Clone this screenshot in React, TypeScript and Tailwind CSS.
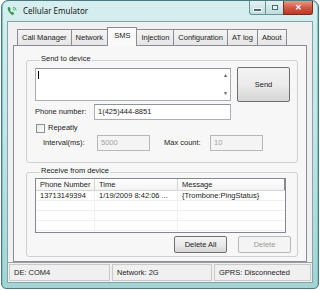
import React from 'react'

const tabs = ['Call Manager', 'Network', 'SMS', 'Injection', 'Configuration', 'AT log', 'About']

function PhoneIcon() {
  return (
    <svg width="11" height="10" viewBox="0 0 11 10">
      <path
        d="M1.2 1.6 C0.6 3.6 2.6 7.4 5.6 8.8 L7 7.6 L5.4 6.1 L4.6 6.8 C3.6 6 2.9 5 2.6 4 L3.4 3.3 L2.4 1.4 Z"
        fill="#2f9a3a"
        stroke="#1d6e27"
        strokeWidth="0.5"
      />
      <path d="M6.2 1.4 A3 3 0 0 1 9.2 4.2" fill="none" stroke="#3aa845" strokeWidth="0.9" />
      <path d="M6 3.1 A1.5 1.5 0 0 1 7.5 4.5" fill="none" stroke="#3aa845" strokeWidth="0.9" />
    </svg>
  )
}

function Button({ label, disabled }: { label: string; disabled?: boolean }) {
  return (
    <div
      className={
        disabled
          ? 'w-[53px] h-[17px] flex items-center justify-center rounded-[2px] border border-[#b5b9bc] bg-[#f4f4f4] text-[#9a9a9a]'
          : 'w-[53px] h-[17px] flex items-center justify-center rounded-[2px] border border-[#707070] bg-gradient-to-b from-[#f3f3f3] via-[#ebebeb] to-[#d6d6d6]'
      }
    >
      {label}
    </div>
  )
}

function Input({ value, w, disabled }: { value: string; w: string; disabled?: boolean }) {
  return (
    <div
      className={
        (disabled
          ? 'bg-[#f4f4f4] border-[#b8b8b8] text-[#a3a3a3] '
          : 'bg-white border-[#abadb3] border-t-[#8e9299] ') +
        w +
        ' h-[16px] border flex items-center pl-[3px]'
      }
    >
      {value}
    </div>
  )
}

export default function App() {
  return (
    <div className="w-[320px] h-[290px] bg-white font-['Liberation_Sans',Arial,sans-serif] text-[7.5px] leading-none text-[#1b1b1b]">
      <div className="ml-[1px] w-[318px] h-[289px] rounded-t-[7px] rounded-b-[5px] border border-[#4d7a7f] bg-gradient-to-b from-[#d6eeef] via-[#c2e3e4] to-[#a4d3d3] flex flex-col px-[5px] pb-[5px] shadow-[inset_1px_0_0_#7cc7c7,inset_-1px_0_0_#7cc7c7]">
        {/* title bar */}
        <div className="h-[20px] flex items-start justify-between">
          <div className="flex items-center h-[19px] gap-[5px]">
            <PhoneIcon />
            <span className="font-['Noto_Sans',sans-serif] text-[8px] text-[#151515]">Cellular Emulator</span>
          </div>
          <div className="flex h-[14px] mt-0">
            <div className="w-[17px] h-full rounded-bl-[3px] border border-t-0 border-[#6d9296] bg-gradient-to-b from-[#e4f2f3] to-[#bcdcdd] flex items-center justify-center">
              <div className="w-[7px] h-[2px] mt-[4px] bg-[#4c6a70] border border-[#f5f5f5] box-content" />
            </div>
            <div className="w-[17px] h-full border-b border-[#6d9296] bg-gradient-to-b from-[#e4f2f3] to-[#bcdcdd] flex items-center justify-center">
              <div className="w-[6px] h-[5px] border border-[#4c6a70] bg-white/60" />
            </div>
            <div className="w-[30px] h-full rounded-br-[3px] border border-t-0 border-[#7a2d22] bg-gradient-to-b from-[#e49a8b] via-[#cf5a45] to-[#b93a26] flex items-center justify-center">
              <span className="text-white text-[8px] font-bold leading-none">✕</span>
            </div>
          </div>
        </div>

        {/* client */}
        <div className="flex-1 border border-[#82a7ab] bg-[#f0f0f0] flex flex-col">
          <div className="px-[5px] pt-[7px]">
            {/* tab strip */}
            <div className="flex h-[16px] ml-[4px] items-end">
              {tabs.map((t) =>
                t === 'SMS' ? (
                  <div
                    key={t}
                    className="relative z-10 -mb-px -ml-px h-[19px] px-[6px] pb-[3px] flex items-center border border-b-0 border-[#898c95] bg-[#fafafa]"
                  >
                    {t}
                  </div>
                ) : (
                  <div
                    key={t}
                    className="-ml-px first:ml-0 h-[16px] px-[4px] flex items-center border border-b-0 border-[#898c95] bg-gradient-to-b from-[#f4f4f4] to-[#e6e6e6]"
                  >
                    {t}
                  </div>
                )
              )}
            </div>

            {/* tab panel */}
            <div className="h-[217px] border border-[#898c95] bg-[#f7f7f7] flex flex-col">
              {/* Send to device */}
              <fieldset className="ml-[12px] mr-[8px] mt-[9px] h-[108px] border border-[#d0d0d0] rounded-[3px] pl-[8px] pr-[4px]">
                <legend className="ml-[5px] px-[1px] h-[10px]">Send to device</legend>
                <div className="flex items-start mt-[2px] gap-[6px]">
                  <div className="w-[196px] h-[33px] mt-[1px] bg-white border border-[#abadb3] border-t-[#8e9299] flex">
                    <div className="flex-1 pl-[2px] pt-[2px]">
                      <div className="w-px h-[8px] bg-black" />
                    </div>
                    <div className="w-[9px] flex flex-col items-center justify-between py-[4px] text-[5px] text-[#5a5a5a]">
                      <span>▲</span>
                      <span>▼</span>
                    </div>
                  </div>
                  <div className="w-[53px] h-[35px] flex items-center justify-center rounded-[2px] border border-[#707070] bg-gradient-to-b from-[#f3f3f3] via-[#ebebeb] to-[#d6d6d6]">
                    Send
                  </div>
                </div>
                <div className="flex items-center mt-[2px]">
                  <span className="w-[59px]">Phone number:</span>
                  <Input value="1(425)444-8851" w="w-[137px]" />
                </div>
                <div className="flex items-center mt-[3px] h-[10px]">
                  <div className="ml-[1px] w-[9px] h-[9px] border border-[#8e8f8f] bg-gradient-to-br from-[#e6e6e6] to-white" />
                  <span className="ml-[3px]">Repeatly</span>
                </div>
                <div className="flex items-center mt-[2px]">
                  <span className="ml-[8px] w-[54px]">Interval(ms):</span>
                  <Input value="5000" w="w-[53px]" disabled />
                  <span className="ml-[14px] w-[46px]">Max count:</span>
                  <Input value="10" w="w-[53px]" disabled />
                </div>
              </fieldset>

              {/* Receive from device */}
              <fieldset className="ml-[12px] mr-[8px] mt-[4px] h-[90px] border border-[#d0d0d0] rounded-[3px] pl-[8px] pr-[6px]">
                <legend className="ml-[5px] px-[1px] h-[10px]">Receive from device</legend>
                <div className="w-[251px] h-[55px] mt-[1px] border border-[#828790] bg-white flex flex-col">
                  <div className="flex h-[12px] border-b border-[#d5d5d5] bg-gradient-to-b from-white to-[#f3f3f3]">
                    <div className="w-[59px] border-r border-[#d5d5d5] pl-[4px] flex items-center">Phone Number</div>
                    <div className="w-[83px] border-r border-[#d5d5d5] pl-[4px] flex items-center">Time</div>
                    <div className="flex-1 border-r border-[#8a8a8a] pl-[4px] flex items-center">Message</div>
                  </div>
                  {[0, 1, 2, 3].map((i) => (
                    <div key={i} className="flex h-[10px] border-b border-[#f0f0f0]">
                      <div className="w-[59px] border-r border-[#f0f0f0] pl-[4px] flex items-center">
                        {i === 0 ? '13713149394' : ''}
                      </div>
                      <div className="w-[83px] border-r border-[#f0f0f0] pl-[4px] flex items-center whitespace-nowrap overflow-hidden">
                        {i === 0 ? '1/19/2009 8:42:06 ...' : ''}
                      </div>
                      <div className="flex-1 pl-[4px] flex items-center">
                        {i === 0 ? '{Trombone:PingStatus}' : ''}
                      </div>
                    </div>
                  ))}
                </div>
                <div className="flex justify-end gap-[11px] mt-[3px]">
                  <Button label="Delete All" />
                  <Button label="Delete" disabled />
                </div>
              </fieldset>
            </div>
          </div>

          {/* status bar */}
          <div className="flex-1 flex items-stretch gap-[2px] px-[1px] pt-[1px] pb-[1px] border-t border-[#a0a0a0]">
            <div className="w-[101px] border border-[#c9c9c9] flex items-center pl-[4px]">DE: COM4</div>
            <div className="w-[100px] border border-[#c9c9c9] flex items-center pl-[4px]">Network: 2G</div>
            <div className="flex-1 border border-[#c9c9c9] flex items-center pl-[4px]">GPRS: Disconnected</div>
          </div>
        </div>
      </div>
    </div>
  )
}
